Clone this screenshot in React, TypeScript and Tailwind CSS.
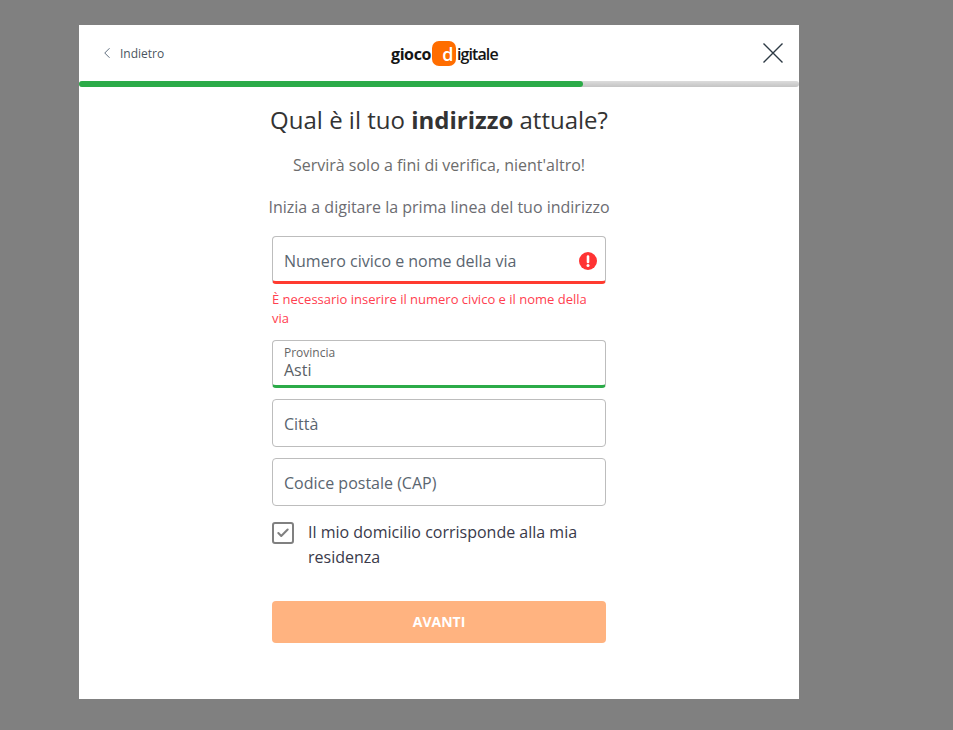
import { ChevronLeft, Check } from "lucide-react";

function Field({ label }: { label: string }) {
  return (
    <div className="h-12 rounded border border-[#bdbdbd] bg-white px-[11px] pt-[2px] flex items-center text-base text-[#5a6570]">
      {label}
    </div>
  );
}

export default function App() {
  return (
    <div className="min-h-[730px] bg-[#808080] pt-[25px] pl-[79px] font-['Open_Sans',sans-serif] overflow-hidden">
      <div className="w-[720px] h-[674px] bg-white">
        <div className="relative h-14 flex items-center justify-between pl-[19px] pr-[16px]">
          <div className="flex items-center gap-1 text-xs text-[#4a5560]">
            <ChevronLeft size={18} strokeWidth={1.3} className="text-[#5a6a7a]" />
            <span className="pt-[2px]">Indietro</span>
          </div>
          <div className="absolute left-[312px] top-[16px] flex items-center text-base font-bold tracking-[-0.4px] text-[#151515]">
            <span>gioco</span>
            <span className="mx-px flex h-[25px] w-6 items-center justify-end rounded-[7px] bg-[#ff6d00] pr-[3px] text-lg font-semibold text-white">
              d
            </span>
            <span className="font-semibold tracking-[-0.9px]">igitale</span>
          </div>
          <svg width="20" height="20" viewBox="0 0 20 20" fill="none" stroke="#2d3a44" strokeWidth="1.4">
            <path d="M0.5 0.5 L19.5 19.5 M19.5 0.5 L0.5 19.5" />
          </svg>
        </div>

        <div className="h-[6px] rounded-full bg-gradient-to-b from-[#dcdcdc] to-[#c4c4c4]">
          <div className="h-full w-[504px] rounded-full bg-[#2bab48]"></div>
        </div>

        <div className="mx-auto w-[334px] flex flex-col items-stretch">
          <h1 className="-mx-4 mt-[18px] text-center text-2xl leading-[30px] text-[#333] whitespace-nowrap">
            Qual è il tuo <b>indirizzo</b> attuale?
          </h1>
          <p className="mt-[18px] text-center text-base leading-6 text-[#6c6c6c]">
            Servirà solo a fini di verifica, nient'altro!
          </p>
          <p className="-mx-4 mt-[18px] text-center text-base leading-6 text-[#6c6c72] whitespace-nowrap">
            Inizia a digitare la prima linea del tuo indirizzo
          </p>

          <div className="relative mt-[17px] h-12 rounded border border-[#bdbdbd] border-b-[3px] border-b-[#ff3b30] bg-white px-[11px] pt-[4px] flex items-center text-base text-[#5a6570]">
            Numero civico e nome della via
            <svg width="18" height="18" viewBox="0 0 18 18" className="absolute right-[8px] top-[15px]">
              <circle cx="9" cy="9" r="9" fill="#ff3333" />
              <path d="M9 4.5 V10" stroke="#fff" strokeWidth="2.6" strokeLinecap="round" />
              <circle cx="9" cy="13.5" r="1.5" fill="#fff" />
            </svg>
          </div>
          <p className="mt-[6px] text-[13px] leading-[19px] text-[#ff4050]">
            È necessario inserire il numero civico e il nome della via
          </p>

          <div className="mt-[12px] h-12 rounded border border-[#bdbdbd] border-b-[3px] border-b-[#2bab48] bg-white px-[11px] pt-[4px]">
            <div className="text-xs leading-[15px] text-[#666]">Provincia</div>
            <div className="text-base leading-[20px] text-[#5a5f66]">Asti</div>
          </div>

          <div className="mt-[11px] flex flex-col gap-[11px]">
            <Field label="Città" />
            <Field label="Codice postale (CAP)" />
          </div>

          <div className="mt-[14px] flex items-start gap-[14px]">
            <div className="mt-[2px] flex h-[22px] w-[22px] shrink-0 items-center justify-center rounded-[3px] border-2 border-[#808080]">
              <Check size={14} strokeWidth={3.5} className="text-[#808080]" />
            </div>
            <p className="text-base leading-[25px] text-[#3a3a4a]">
              Il mio domicilio corrisponde alla mia residenza
            </p>
          </div>

          <div className="mt-[31px] flex h-[42px] items-center justify-center rounded-sm bg-[#ffb380] text-sm font-bold text-white">
            AVANTI
          </div>
        </div>
      </div>
    </div>
  );
}
